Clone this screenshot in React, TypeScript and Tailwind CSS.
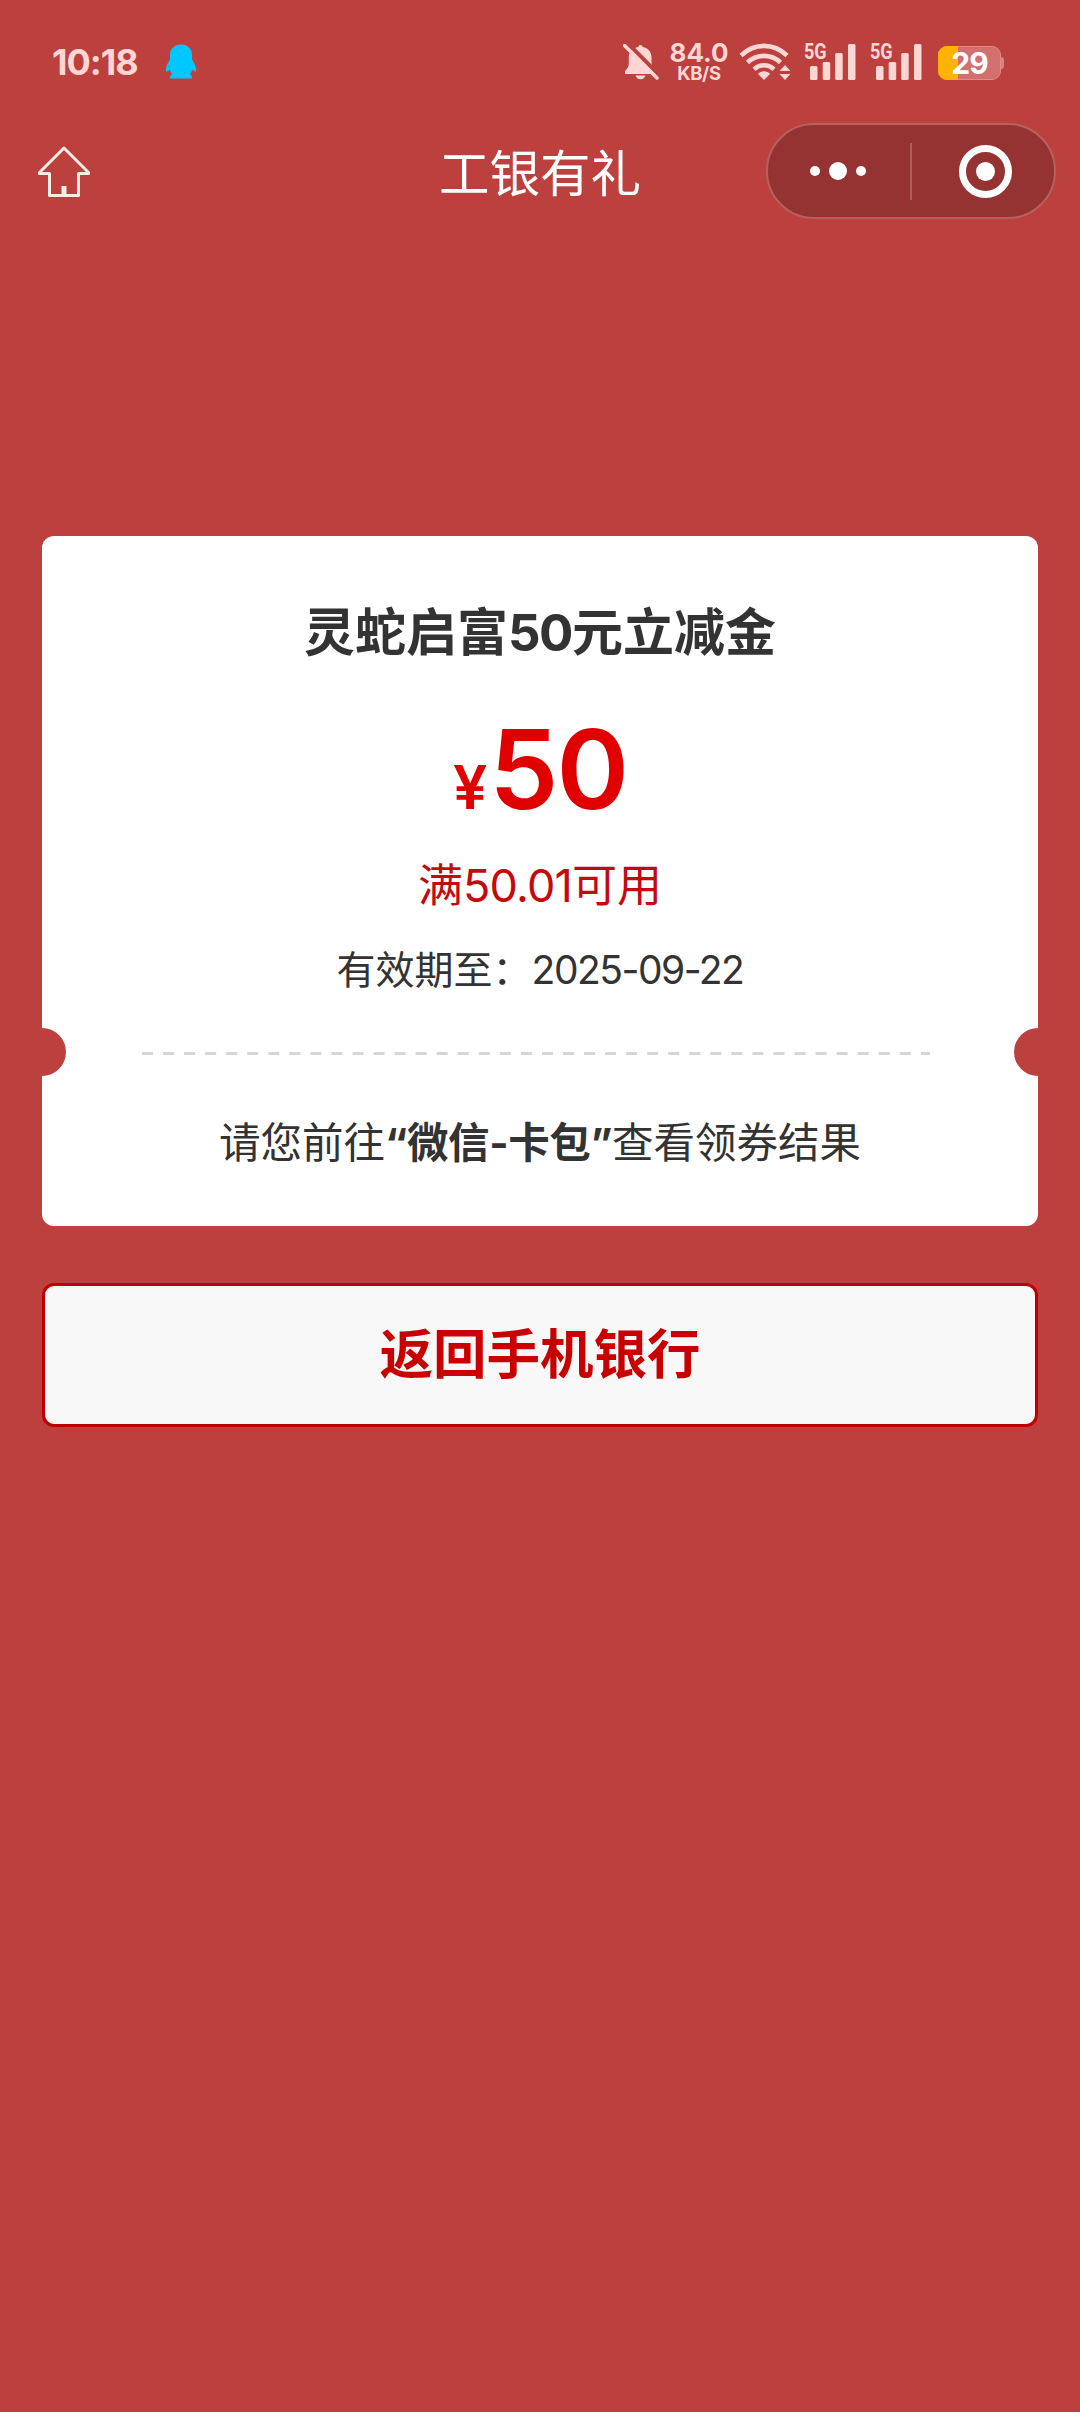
const SIGNALS = ['sim1', 'sim2']

function QQIcon() {
  return (
    <svg width="32" height="36" viewBox="0 0 32 36" fill="#00c8ff">
      <path d="M16 .5c-6.800 0-11 4.500-11 10.500v4.500C3 18.600 .8 22.500.8 26c0 1.500.5 1.900 1.200 1.600.9-.4 1.900-1.300 2.600-2.300.4 1.800 1.300 3.600 2.700 5-1.700.8-2.500 2-2.500 4.200h22.400c0-2.200-.8-3.400-2.500-4.200 1.400-1.400 2.300-3.200 2.700-5 .7 1 1.700 1.900 2.600 2.300.7.3 1.200-.1 1.200-1.600 0-3.500-2.200-7.400-4.200-10.500V11C27 5 22.800.5 16 .5z" />
    </svg>
  )
}

function BellOffIcon() {
  return (
    <svg width="36" height="36" viewBox="0 0 36 36">
      <path d="M17.500 1c1.200 0 2 .8 2.200 1.900 5.400 1.100 8.800 5 8.800 10.300v6.300c0 3 1.200 5 3.500 7.500v3H2v-3c2.500-2.500 3.800-4.500 3.800-7.500v-6.300c0-5.300 4-9.200 9.500-10.300.2-1.100 1-1.900 2.200-1.900z" fill="#ffd6d3" />
      <path d="M12.500 31.500h10c-.8 2.300-2.600 3.800-5 3.800s-4.200-1.500-5-3.800z" fill="#ffd6d3" />
      <path d="M3.500-2 38 33" stroke="#bc403d" strokeWidth="4" />
      <path d="M1.500 1.500 34 34" stroke="#ffd6d3" strokeWidth="3.500" strokeLinecap="round" />
    </svg>
  )
}

function WifiIcon() {
  return (
    <svg width="52" height="38" viewBox="0 0 52 38" fill="none">
      <g stroke="#ffd6d3" strokeWidth="4.600">
        <path d="M2 12.500C15.500-.3 34.500-.3 48 12.500" />
        <path d="M8.500 19.500C18 10.700 32 10.700 41.500 19.500" />
        <path d="M15 26.200C21 21 29 21 35 26.200" />
      </g>
      <path d="M25 37l-6.200-6.200c3.400-3.400 9-3.400 12.400 0z" fill="#ffd6d3" />
      <path d="M46 22l5.500 6h-11zM46 37l5.500-6h-11z" fill="#ffd6d3" />
    </svg>
  )
}

function SignalIcon() {
  return (
    <div className="relative w-[52px] h-[38px]">
      <span className="absolute left-0 top-0 origin-left scale-x-[0.82] font-['Roboto',sans-serif] font-bold text-[22px] leading-[18px]">5G</span>
      <svg width="52" height="38" viewBox="0 0 52 38" fill="#ffd6d3">
        <rect x="6" y="23" width="7.500" height="14" rx="1.500" />
        <rect x="18.700" y="19" width="7.500" height="18" rx="1.500" />
        <rect x="31.200" y="10" width="7.500" height="27" rx="1.500" />
        <rect x="44" y="1" width="7.500" height="36" rx="1.500" />
      </svg>
    </div>
  )
}

function Battery() {
  return (
    <div className="flex items-center mt-0.5">
      <div className="relative w-[63px] h-[34px] rounded-[9px] bg-[#d3706f] border border-[#e08c88]">
        <div className="absolute -left-px -top-px w-5 h-[34px] rounded-l-[9px] bg-[#ffb300]" />
        <span className="absolute inset-0 flex items-center justify-center text-white font-bold text-[30px] leading-none tracking-[-1px]">29</span>
      </div>
      <div className="w-[3px] h-3 rounded-r-[3px] bg-[#d98380]" />
    </div>
  )
}

function StatusBar() {
  return (
    <div className="flex items-center justify-between h-[44px] mt-10 pl-[52px] pr-[76px] text-[#ffd6d3]">
      <div className="flex items-center gap-[27px]">
        <span className="w-[86px] pb-px font-bold text-[36px] leading-none tracking-[-1px] whitespace-nowrap">10:18</span>
        <QQIcon />
      </div>
      <div className="flex items-center">
        <BellOffIcon />
        <div className="w-[60px] ml-2.5 flex flex-col items-center font-bold">
          <span className="text-[26px] leading-[20px]">84.0</span>
          <span className="mt-0.5 text-[18.500px] leading-[17px] tracking-[-0.3px]">KB/S</span>
        </div>
        <div className="ml-2.5"><WifiIcon /></div>
        <div className="flex gap-3.5 ml-[13px]">
          {SIGNALS.map((s) => <SignalIcon key={s} />)}
        </div>
        <div className="ml-4"><Battery /></div>
      </div>
    </div>
  )
}

function NavBar() {
  return (
    <header className="grid grid-cols-[1fr_auto_1fr] items-center h-24 mt-[39px] px-6">
      <svg className="ml-3" width="56" height="54" viewBox="0 0 56 54" fill="none" stroke="#ffebe6" strokeWidth="3" strokeLinejoin="round" strokeLinecap="round">
        <path d="M28 4 3.500 28.500V29.500H13.500V51.500H42.500V29.500H52.500V28.500Z" />
        <path d="M28 42v9" strokeWidth="5" strokeLinecap="butt" />
      </svg>
      <h1 className="pt-[5px] text-[50.500px] leading-[60px] text-white font-normal whitespace-nowrap">工银有礼</h1>
      <div className="justify-self-end flex items-center w-[290px] h-24 rounded-full bg-[#943331] border-2 border-[#b9605e]">
        <div className="w-[142px] flex items-center justify-center gap-[9px] pr-0.5">
          <i className="size-2.5 rounded-full bg-white" />
          <i className="size-[18px] rounded-full bg-white" />
          <i className="size-2.5 rounded-full bg-white" />
        </div>
        <div className="w-0.5 h-[57px] bg-[#b05c5a]" />
        <div className="w-[142px] flex justify-center pl-1">
          <div className="size-[53px] rounded-full border-7 border-white flex items-center justify-center">
            <i className="size-[19px] rounded-full bg-white" />
          </div>
        </div>
      </div>
    </header>
  )
}

function CouponCard() {
  return (
    <section className="relative flex flex-col items-center h-[690px] rounded-[12px] bg-white overflow-hidden whitespace-nowrap">
      <h2 className="mt-[67px] h-[60px] text-[51px] leading-[60px] font-bold text-[#333]">
        灵蛇启富<span className="tracking-[-1.500px]">50</span>元立减金
      </h2>
      <div className="mt-[46px] h-[120px] flex items-baseline font-semibold text-[#e00000] leading-[120px]">
        <span className="mr-0.5 text-[61px]">¥</span>
        <span className="text-[110px] tracking-[-2px]">50</span>
      </div>
      <div className="mt-[27px] h-[60px] text-[45px] leading-[60px] text-[#c40a0f]">
        满<span className="tracking-[-0.8px]">50.01</span>可用
      </div>
      <div className="mt-[24px] h-[60px] text-[39px] leading-[60px] text-[#333]">
        有效期至：<span className="tracking-[-1.500px]">2025-09-22</span>
      </div>
      <svg className="mt-[52px] mr-2" width="788" height="3" viewBox="0 0 788 3">
        <path d="M0 1.500H788" stroke="#d6d6d6" strokeWidth="3" strokeDasharray="11 10.050" />
      </svg>
      <p className="mt-[56px] h-[64px] text-[41.500px] leading-[64px] text-[#333]">
        请您前往<b className="tracking-[-0.4px]">“微信-卡包”</b>查看领券结果
      </p>
      {/* ticket notches */}
      <i className="absolute -left-6 top-[492px] size-12 rounded-full bg-[#bc403d]" />
      <i className="absolute -right-6 top-[492px] size-12 rounded-full bg-[#bc403d]" />
    </section>
  )
}

export default function App() {
  return (
    <div className="flow-root w-[1080px] h-[2412px] bg-[#bc403d] overflow-hidden font-['Inter','Noto_Sans_CJK_SC',sans-serif]">
      <StatusBar />
      <NavBar />
      <main className="flex flex-col mt-[317px] px-[42px]">
        <CouponCard />
        <button className="mt-[57px] h-36 rounded-[12px] border-3 border-[#c00000] bg-[#f8f8f8] text-[53.500px] leading-none font-bold text-[#c80000]">
          返回手机银行
        </button>
      </main>
    </div>
  )
}
